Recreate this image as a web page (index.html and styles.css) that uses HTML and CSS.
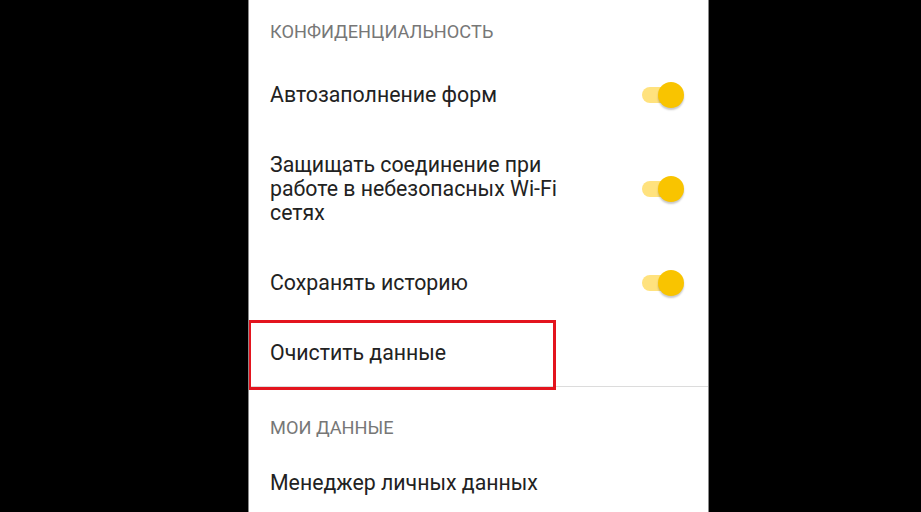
FILE: index.html
```html
<!DOCTYPE html>
<html lang="ru">
<head>
<meta charset="utf-8">
<link rel="stylesheet" href="styles.css">
</head>
<body>
<div class="panel">
  <div class="category first">КОНФИДЕНЦИАЛЬНОСТЬ</div>
  <div class="row">
    <div class="label">Автозаполнение форм</div>
    <div class="switch"><span class="track"></span><span class="thumb"></span></div>
  </div>
  <div class="row">
    <div class="label narrow">Защищать соединение при работе в небезопасных Wi-Fi сетях</div>
    <div class="switch"><span class="track"></span><span class="thumb"></span></div>
  </div>
  <div class="row">
    <div class="label">Сохранять историю</div>
    <div class="switch"><span class="track"></span><span class="thumb"></span></div>
  </div>
  <div class="row marked">
    <div class="label">Очистить данные</div>
    <div class="highlight"></div>
  </div>
  <div class="divider"></div>
  <div class="category second">МОИ ДАННЫЕ</div>
  <div class="row">
    <div class="label">Менеджер личных данных</div>
  </div>
</div>
</body>
</html>
```
FILE: styles.css
```css
html, body {
  margin: 0;
  padding: 0;
  background: #000;
  height: 100%;
  overflow: hidden;
}
.panel {
  margin-left: 248px;
  width: 459px;
  height: 512px;
  background: #fff;
  border-left: 1px solid #8a8a8a;
  border-right: 1px solid #8a8a8a;
  font-family: Roboto, "Noto Sans", sans-serif;
  color: #222;
  overflow: hidden;
}
.category {
  font-size: 18.2px;
  line-height: 24px;
  color: #777;
  padding-left: 21px;
}
.category.first {
  padding-top: 20px;
  padding-bottom: 14px;
}
.category.second {
  padding-top: 29px;
  padding-bottom: 6px;
}
.row {
  display: flex;
  align-items: center;
  justify-content: space-between;
  padding: 25px 24px 21px 21px;
  position: relative;
}
.label {
  font-size: 21.3px;
  line-height: 24px;
}
.label.narrow {
  width: 295px;
}
.switch {
  position: relative;
  width: 42px;
  height: 24px;
  flex: none;
}
.track {
  position: absolute;
  left: 0;
  top: 4px;
  width: 40px;
  height: 16px;
  border-radius: 8px;
  background: #ffe27e;
}
.thumb {
  position: absolute;
  right: 0;
  top: -1px;
  width: 26px;
  height: 26px;
  border-radius: 50%;
  background: #f9c400;
  box-shadow: 0 2px 2px rgba(0,0,0,0.22);
}
.divider {
  height: 1px;
  background: #dcdcdc;
}
.highlight {
  position: absolute;
  left: -1px;
  top: 4px;
  width: 302px;
  height: 64px;
  border: 3px solid #e3141e;
}
```
